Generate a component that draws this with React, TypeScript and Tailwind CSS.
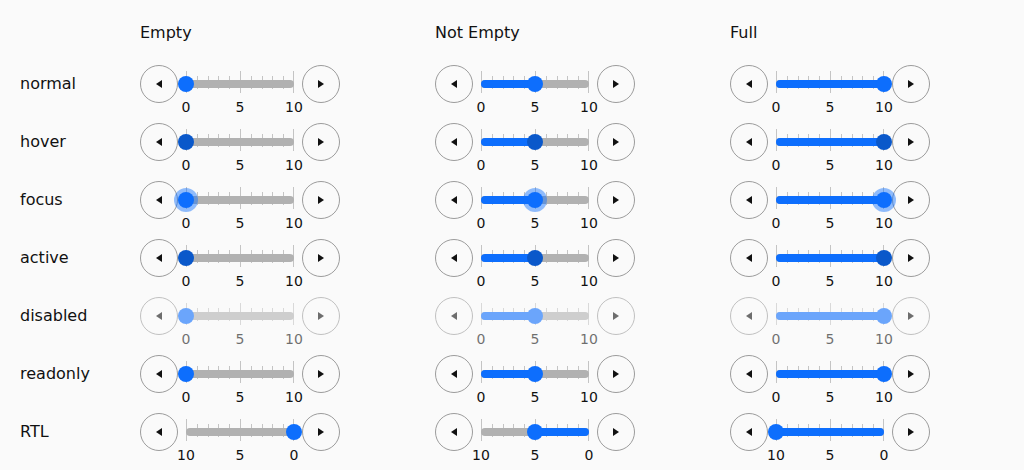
import clsx from 'clsx'

type SliderState = 'normal' | 'hover' | 'focus' | 'active' | 'disabled' | 'readonly' | 'RTL'

const STATES: SliderState[] = ['normal', 'hover', 'focus', 'active', 'disabled', 'readonly', 'RTL']
const COLUMNS = [
  { title: 'Empty', value: 0 },
  { title: 'Not Empty', value: 5 },
  { title: 'Full', value: 10 },
]

const TRACK_W = 108
const STEP = TRACK_W / 10

function Arrow({ dir }: { dir: 'left' | 'right' }) {
  return (
    <svg width="6" height="8" viewBox="0 0 6 8" className="fill-current">
      {dir === 'left' ? <polygon points="6,0 6,8 0,4" /> : <polygon points="0,0 0,8 6,4" />}
    </svg>
  )
}

function StepButton({ dir }: { dir: 'left' | 'right' }) {
  return (
    <button className="w-[38px] h-[38px] shrink-0 rounded-full border border-[#9c9c9c] flex items-center justify-center text-[#111]">
      <Arrow dir={dir} />
    </button>
  )
}

function Slider({ value, state }: { value: number; state: SliderState }) {
  const rtl = state === 'RTL'
  const pos = (rtl ? 10 - value : value) * STEP
  const fillLeft = rtl ? pos : 0
  const fillWidth = rtl ? TRACK_W - pos : pos
  const labels = rtl ? ['10', '5', '0'] : ['0', '5', '10']

  return (
    <div className="w-[124px] h-[38px] px-2 shrink-0">
      <div className="relative w-[108px] h-[38px]">
        {/* tick marks sit behind the track */}
        {Array.from({ length: 11 }).map((_, i) => {
          const major = i % 5 === 0
          return (
            <div
              key={i}
              className={clsx(
                'absolute w-px bg-[#c4c4c4]',
                major ? 'top-[6px] h-[22px]' : 'top-[11px] h-[13px]'
              )}
              style={{ left: Math.round(i * STEP) - (i === 10 ? 1 : 0) }}
            />
          )
        })}
        <div className="absolute left-0 top-[15px] w-[108px] h-2 rounded-full bg-[#b1b1b1]" />
        <div
          className="absolute top-[15px] h-2 rounded-full bg-[#0d6efd]"
          style={{ left: fillLeft, width: fillWidth }}
        />
        <div
          className={clsx(
            'absolute top-[11px] w-4 h-4 rounded-full',
            state === 'hover' || state === 'active' ? 'bg-[#0a58ca]' : 'bg-[#0d6efd]',
            state === 'focus' && 'shadow-[0_0_0_4px_rgba(13,110,253,0.45)]'
          )}
          style={{ left: pos - 8 }}
        />
        {labels.map((l, i) => (
          <span
            key={i}
            className="absolute top-[34px] w-8 -ml-4 text-center text-[14px] leading-4"
            style={{ left: i * 54 }}
          >
            {l}
          </span>
        ))}
      </div>
    </div>
  )
}

function Cell({ value, state }: { value: number; state: SliderState }) {
  return (
    <div className={clsx('flex items-center h-[58px]', state === 'disabled' && 'opacity-60')}>
      <StepButton dir="left" />
      <Slider value={value} state={state} />
      <StepButton dir="right" />
    </div>
  )
}

export default function App() {
  return (
    <div
      className="w-[1024px] h-[470px] bg-[#fafafa] text-[#111] pt-[21px] overflow-hidden"
      style={{ fontFamily: '"DejaVu Sans", sans-serif' }}
    >
      <div className="grid grid-cols-[140px_295px_295px_295px] mb-[10px]">
        <div />
        {COLUMNS.map(c => (
          <div key={c.title} className="text-[16px] leading-6">{c.title}</div>
        ))}
      </div>
      {STATES.map(s => (
        <div key={s} className="grid grid-cols-[140px_295px_295px_295px] items-center">
          <div className="pl-5 text-[16px] leading-6">{s}</div>
          {COLUMNS.map(c => (
            <Cell key={c.title} value={c.value} state={s} />
          ))}
        </div>
      ))}
    </div>
  )
}
